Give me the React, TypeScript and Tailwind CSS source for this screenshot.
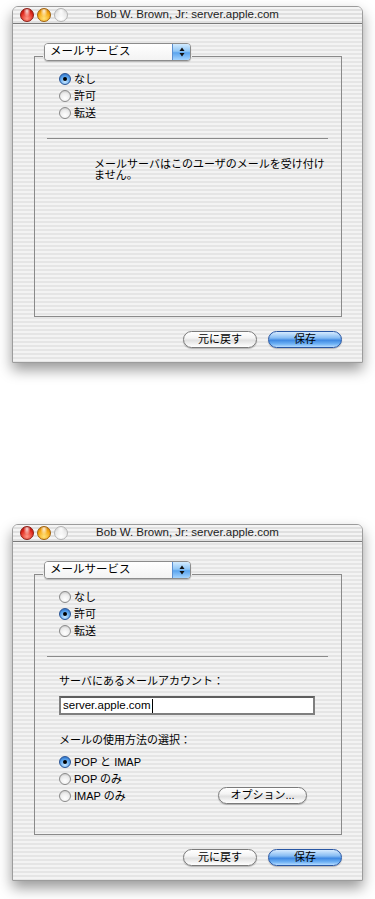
import React from 'react';

const FONT = { fontFamily: '"Liberation Sans", "Noto Sans CJK JP", sans-serif' };

function Light({ kind }: { kind: 'close' | 'min' | 'zoom' }) {
  const cls =
    kind === 'close'
      ? 'border-[#8e1a12] bg-[radial-gradient(ellipse_at_50%_18%,rgba(255,255,255,0.85)_0%,rgba(255,255,255,0)_42%),radial-gradient(circle_at_50%_78%,#ff9a88_0%,#e0281c_58%,#9a0d07_100%)]'
      : kind === 'min'
      ? 'border-[#a0600a] bg-[radial-gradient(ellipse_at_50%_18%,rgba(255,255,255,0.85)_0%,rgba(255,255,255,0)_42%),radial-gradient(circle_at_50%_78%,#ffe27a_0%,#f5a611_58%,#b86a04_100%)]'
      : 'border-[#b4b4b4] bg-[radial-gradient(ellipse_at_50%_18%,rgba(255,255,255,0.9)_0%,rgba(255,255,255,0)_42%),radial-gradient(circle_at_50%_78%,#ffffff_0%,#e9e9e9_60%,#c8c8c8_100%)]';
  return <div className={`h-[14px] w-[14px] rounded-full border ${cls}`} />;
}

function Radio({ on, label }: { on?: boolean; label: string }) {
  return (
    <div className="flex h-[17px] items-center gap-[3px]">
      {on ? (
        <div className="flex h-[12px] w-[12px] items-center justify-center rounded-full border border-[#2a5596] bg-[radial-gradient(circle_at_50%_78%,#c6e6ff_0%,#5aa3ec_55%,#1f5fb6_100%)]">
          <div className="h-[4px] w-[4px] rounded-full bg-black" />
        </div>
      ) : (
        <div className="h-[12px] w-[12px] rounded-full border border-[#8a8a8a] bg-[radial-gradient(circle_at_50%_72%,#ffffff_0%,#ececec_55%,#b9b9b9_100%)]" />
      )}
      <span className="text-[11px] leading-[12px] text-black">{label}</span>
    </div>
  );
}

function Pill({ label, blue, w }: { label: string; blue?: boolean; w: string }) {
  return (
    <button
      className={`flex h-[17px] items-center justify-center rounded-full border text-[11px] leading-none text-black shadow-[0_1px_1px_rgba(0,0,0,0.25)] ${w} ${
        blue
          ? 'border-[#2957a4] bg-[linear-gradient(180deg,#d6ebff_0%,#86bcf3_40%,#3f89e2_55%,#6fb2f5_80%,#b7dcff_100%)]'
          : 'border-[#7b7b7b] bg-[linear-gradient(180deg,#ffffff_0%,#f4f4f4_40%,#e0e0e0_55%,#f2f2f2_80%,#ffffff_100%)]'
      }`}
    >
      {label}
    </button>
  );
}

function Popup() {
  return (
    <div className="ml-[1px] flex h-[18px] w-[147px] overflow-hidden rounded-[4px] border border-[#8c8c8c] bg-white shadow-[0_1px_1px_rgba(0,0,0,0.2)]">
      <div className="flex flex-1 items-center bg-[linear-gradient(180deg,#ffffff_0%,#f3f3f3_100%)] pl-[5px] text-[11.5px] leading-none text-black">
        メールサービス
      </div>
      <div className="flex w-[18px] items-center justify-center border-l border-[#5b8fd0] bg-[linear-gradient(180deg,#d2ebff_0%,#8fc6f6_45%,#5aa4ee_55%,#a4d4ff_100%)]">
        <svg width="6" height="10" viewBox="0 0 6 10">
          <path d="M3 0.5 L5.5 4 L0.5 4 Z" fill="#111" />
          <path d="M3 9.5 L5.5 6 L0.5 6 Z" fill="#111" />
        </svg>
      </div>
    </div>
  );
}

function Window({ mode }: { mode: 'none' | 'allow' }) {
  return (
    <div
      className="mx-[12px] flex h-[357px] flex-col overflow-hidden rounded-t-[6px] border border-[#9c9c9c] bg-[repeating-linear-gradient(180deg,#f3f3f3_0px,#f3f3f3_2px,#e5e5e5_2px,#e5e5e5_4px)] shadow-[0_7px_14px_rgba(0,0,0,0.4)]"
      style={FONT}
    >
      {/* Title bar */}
      <div className="grid h-[17px] shrink-0 grid-cols-[1fr_auto_1fr] items-center border-b border-[#7a7a7a] bg-[repeating-linear-gradient(180deg,#f4f4f4_0px,#f4f4f4_2px,#e0e0e0_2px,#e0e0e0_4px)]">
        <div className="flex items-center gap-[3px] pl-[7px]">
          <Light kind="close" />
          <Light kind="min" />
          <Light kind="zoom" />
        </div>
        <div className="text-[11.5px] leading-none text-[#1e1e1e]">Bob W. Brown, Jr: server.apple.com</div>
        <div />
      </div>

      {/* Body */}
      <div className="flex flex-1 flex-col pl-[21px] pr-[20px]">
        <div className="mt-[19px] flex h-[18px] items-start">
          <div className="mt-[13px] h-[5px] w-[9px] border-l border-t border-[#8a8a8a]" />
          <Popup />
          <div className="ml-[1px] mt-[13px] h-[5px] flex-1 border-r border-t border-[#8a8a8a]" />
        </div>

        <div className="flex flex-1 flex-col border-x border-b border-[#8a8a8a] pt-[9px]">
          <div className="pl-[24px]">
            <Radio on={mode === 'none'} label="なし" />
            <Radio on={mode === 'allow'} label="許可" />
            <Radio label="転送" />
          </div>
          <div className="ml-[12px] mr-[13px] mt-[17px] h-px bg-[#8a8a8a]" />

          {mode === 'none' ? (
            <p className="ml-[59px] mt-[20px] w-[236px] text-[11px] leading-[11px] text-black">
              メールサーバはこのユーザのメールを受け付けません。
            </p>
          ) : (
            <div className="pl-[24px]">
              <div className="mt-[18px] text-[11px] leading-[12px] text-black">サーバにあるメールアカウント：</div>
              <div className="mt-[9px] flex h-[19px] w-[256px] items-center border-2 border-[#7f7f7f] border-t-[#5e5e5e] bg-white pl-[2px] text-[11.5px] text-black">
                server.apple.com
                <span className="ml-[1px] h-[14px] w-px bg-black" />
              </div>
              <div className="mt-[19px] text-[11px] leading-[12px] text-black">メールの使用方法の選択：</div>
              <div className="mt-[7px]">
                <Radio on label="POP と IMAP" />
                <Radio label="POP のみ" />
                <div className="flex items-center pr-[34px]">
                  <Radio label="IMAP のみ" />
                  <div className="ml-auto">
                    <Pill label="オプション..." w="w-[89px]" />
                  </div>
                </div>
              </div>
            </div>
          )}
        </div>

        <div className="mb-[14px] mt-[14px] flex justify-end gap-[11px]">
          <Pill label="元に戻す" w="w-[74px]" />
          <Pill label="保存" blue w="w-[74px]" />
        </div>
      </div>
    </div>
  );
}

export default function App() {
  return (
    <div className="min-h-screen bg-white pt-[6px]">
      <Window mode="none" />
      <div className="h-[161px]" />
      <Window mode="allow" />
    </div>
  );
}
